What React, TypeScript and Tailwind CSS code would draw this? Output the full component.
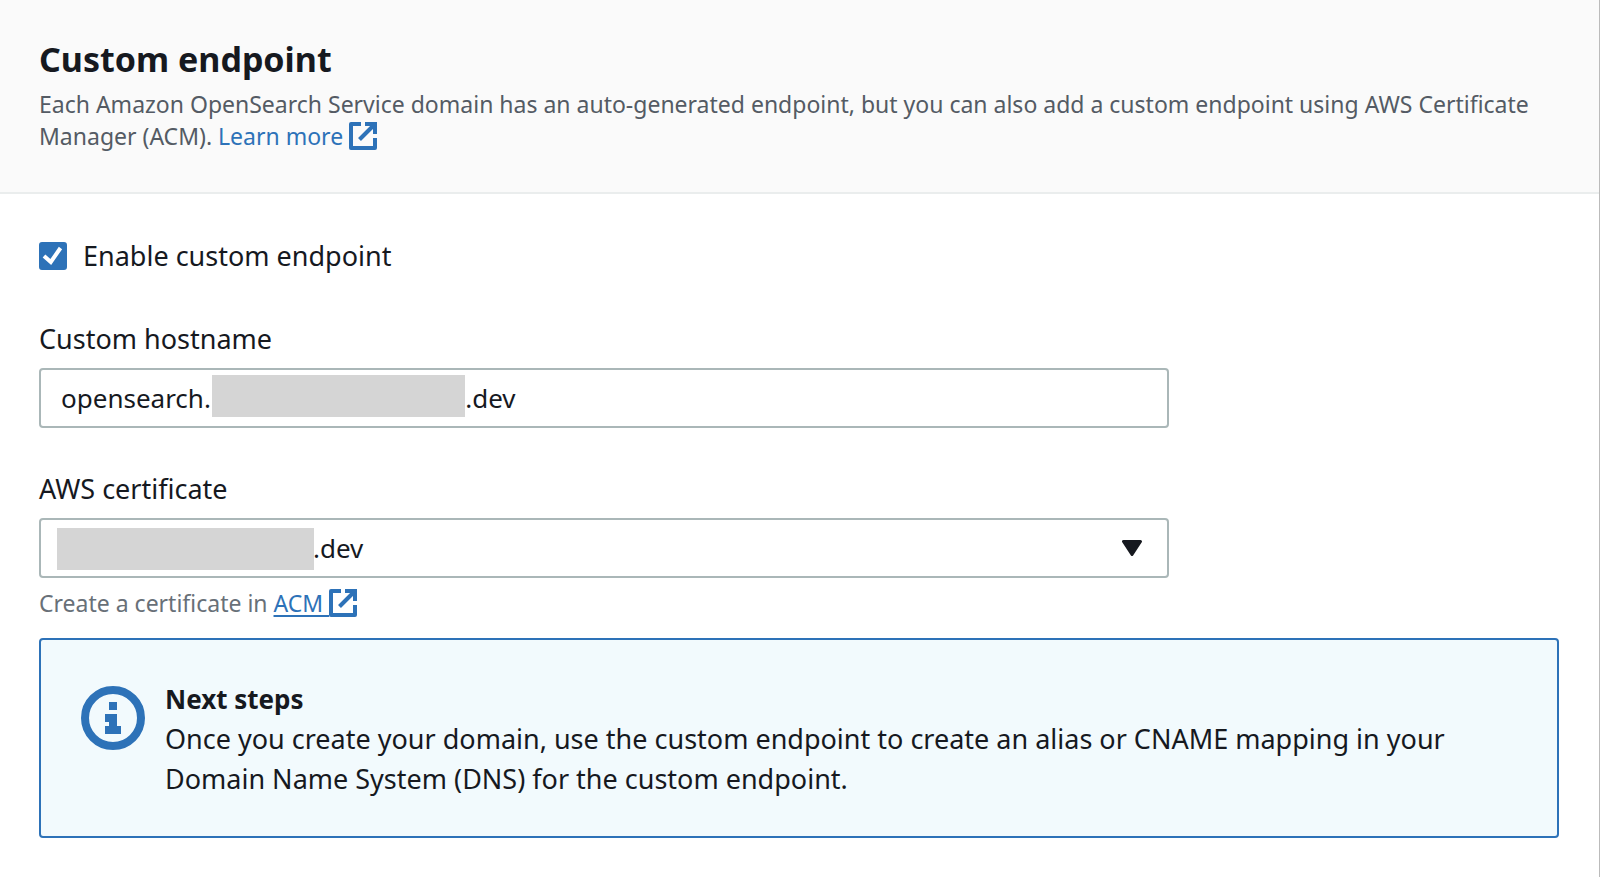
import { useState } from "react";

const HIDDEN = "\u2003".repeat(9) + "\u00a0".repeat(3);

function ExternalIcon() {
  return (
    <svg
      aria-hidden="true"
      viewBox="0 0 28 28"
      className="inline-block size-7 align-[-5px]"
      fill="none"
      stroke="currentColor"
      strokeWidth="4"
    >
      <path d="M12 2H2V26H26V16" strokeLinejoin="round" />
      <path d="M16 2H26V12" />
      <path d="M25 3L10.5 17.5" />
    </svg>
  );
}

function InfoIcon() {
  return (
    <svg aria-hidden="true" viewBox="0 0 64 64" className="mt-[7px] size-16 shrink-0 text-[#2d72b8]">
      <circle cx="32" cy="32" r="28" fill="none" stroke="currentColor" strokeWidth="8" />
      <path d="M28 16h8v8h-8zM24 28h12v12h4v8H24v-8h4v-4h-4z" fill="currentColor" />
    </svg>
  );
}

export default function App() {
  const [enabled, setEnabled] = useState(true);
  const [hostname, setHostname] = useState(`opensearch.${HIDDEN}.dev`);

  return (
    <main className="min-h-screen border-r border-[#bbbbbb] bg-white font-['Noto_Sans',sans-serif] text-[#16191f]">
      <header className="border-b-2 border-[#eaeded] bg-[#fafafa] pt-9 pr-10 pb-10 pl-[39px]">
        <h1 className="text-[34px] leading-[46px] font-bold">Custom endpoint</h1>
        <p className="mt-1.5 text-[23px] leading-8 text-[#545b64]">
          Each Amazon OpenSearch Service domain has an auto-generated endpoint, but you can also add a custom
          endpoint using AWS Certificate Manager (ACM).{" "}
          <a href="#learn-more" className="whitespace-nowrap text-[#2d72b8]">
            Learn more <ExternalIcon />
          </a>
        </p>
      </header>

      <div className="pt-[42px] pr-10 pb-10 pl-[39px] text-[27px] leading-10">
        <label className="flex w-fit items-center gap-4">
          <span className="relative flex size-7">
            <input
              type="checkbox"
              checked={enabled}
              onChange={(e) => setEnabled(e.target.checked)}
              className="size-7 appearance-none rounded-[3px] border-2 border-[#687078] checked:border-[#2d72b8] checked:bg-[#2d72b8]"
            />
            {enabled && (
              <svg aria-hidden="true" viewBox="0 0 28 28" className="pointer-events-none absolute inset-0 size-7">
                <path d="M5 14L11.8 20L21.5 6" fill="none" stroke="#fff" strokeWidth="4" />
              </svg>
            )}
          </span>
          Enable custom endpoint
        </label>

        <div className="mt-[43px] w-3/4 pr-2.5">
          <label htmlFor="hostname" className="block">
            Custom hostname
          </label>
          <div className="relative mt-[9px]">
            <input
              id="hostname"
              type="text"
              value={hostname}
              onChange={(e) => setHostname(e.target.value)}
              className="block h-15 w-full rounded-[4px] border-2 border-[#aab7b8] bg-white px-5 text-[26px]"
            />
            <span className="pointer-events-none absolute top-[7px] left-[173px] h-[42px] w-[253px] bg-[#d5d5d5]" />
          </div>
        </div>

        <div className="mt-[41px] w-3/4 pr-2.5">
          <label htmlFor="certificate" className="block">
            AWS certificate
          </label>
          <div className="relative mt-[9px]">
            <select
              id="certificate"
              className="block h-15 w-full appearance-none rounded-[4px] border-2 border-[#aab7b8] bg-white pr-16 pl-[272px] text-[26px]"
            >
              <option>.dev</option>
            </select>
            <span className="pointer-events-none absolute top-2.5 left-[18px] h-[42px] w-[257px] bg-[#d5d5d5]" />
            <svg
              aria-hidden="true"
              viewBox="0 0 20 16"
              className="pointer-events-none absolute top-[22px] right-[27px] h-4 w-5"
            >
              <path d="M1.5 1.5H18.5L10 14.5Z" fill="#16191f" stroke="#16191f" strokeWidth="3" strokeLinejoin="round" />
            </svg>
          </div>
          <p className="mt-2 text-[23px] leading-[34px] text-[#687078]">
            Create a certificate in{" "}
            <a
              href="#acm"
              className="whitespace-nowrap text-[#2d72b8] underline decoration-2 underline-offset-[3px]"
            >
              ACM <ExternalIcon />
            </a>
          </p>
        </div>

        <section className="mt-[18px] flex gap-5 rounded-[4px] border-2 border-[#2d72b8] bg-[#f2fafd] px-10 pt-[39px] pb-[37px]">
          <InfoIcon />
          <div>
            <h2 className="text-[26px] leading-10 font-bold">Next steps</h2>
            <p>
              Once you create your domain, use the custom endpoint to create an alias or CNAME mapping in your Domain
              Name System (DNS) for the custom endpoint.
            </p>
          </div>
        </section>
      </div>
    </main>
  );
}
